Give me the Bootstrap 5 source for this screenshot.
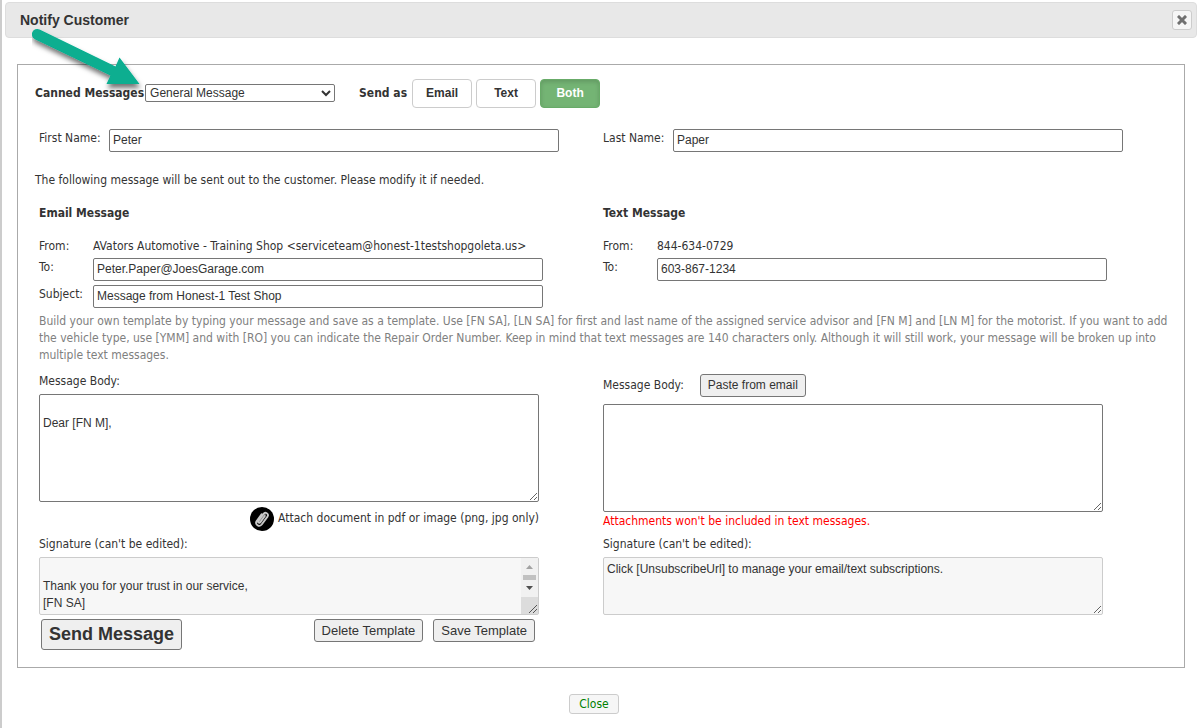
<!DOCTYPE html>
<html lang="en">
<head>
<meta charset="utf-8">
<meta name="viewport" content="width=device-width, initial-scale=1">
<title>Notify Customer</title>
<link href="https://cdn.jsdelivr.net/npm/bootstrap@5.3.0/dist/css/bootstrap.min.css" rel="stylesheet">
<style>
  body { font: 12px/17px "DejaVu Sans Condensed", "DejaVu Sans", sans-serif; color: #333; background: #fff; }
  .dialog { min-height: 100vh; border-left: 2px solid #ccc; padding: 2px 3px 0 3px; }
  .titlebar { height: 36px; background: #e8e8e8; border: 1px solid #ddd; border-radius: 4px; padding: 0 4px 0 14px; }
  .titlebar h1 { font: bold 14px/17px "Liberation Sans", Arial, sans-serif; }
  .btn-x { width: 20px; height: 20px; background: #f6f6f6; border: 1px solid #ccc; border-radius: 3px; }
  .panel { margin: 26px 12px 0; border: 1px solid #aaa; padding: 14px 17px 17px; }
  .inset { padding-left: 4px; }
  .half { flex: 0 0 50%; min-width: 0; }
  h2, .strong { font-size: 12px; line-height: 17px; font-weight: bold; }

  .form-control { font: 12px/17px "Liberation Sans", Arial, sans-serif; color: #333; background: #fff; border: 1px solid #767676; border-radius: 2px; padding: 2px 3px; min-width: 0; }
  input.form-control { height: 23px; max-width: 450px; padding: 1px 3px 3px; }
  textarea.form-control { max-width: 500px; resize: both; padding-top: 3px; }
  textarea.form-control.body-box { height: 108px; min-height: 0; }
  textarea.form-control.sign-box { height: 58px; min-height: 0; background: #f7f7f7; border-color: #ccc; overflow: hidden; }
  .col-box { max-width: 500px; }
  .picker { width: 190px; height: 18px; margin: 0 0 2px 1px; font: 12px/14px "Liberation Sans", Arial, sans-serif; color: #333; background: #fff; border: 1px solid #767676; border-radius: 2px; }
  .names { margin-top: 21px; }
  .names label { flex: 0 0 70px; padding-top: 1px; }
  .intro { margin: 20px 0 16px; }
  .lbl-field { flex: 0 0 54px; }
  label.lbl-field { padding-top: 1px; }
  .from-row { height: 16px; }

  .send-as { margin-left: 5px; }
  .send-as .btn { width: 60px; height: 29px; padding: 0; font: bold 12px/17px "Liberation Sans", Arial, sans-serif; color: #333; background: #fff; border: 1px solid #ccc; border-radius: 4px; }
  .send-as .btn.active { color: #fff; background: #74b474; border-color: #68ab68; box-shadow: inset 0 2px 4px rgba(0,0,0,.15); }
  .btn-sys { font-family: "Liberation Sans", Arial, sans-serif; color: #333; background: #efefef; border: 1px solid #767676; border-radius: 3px; height: 23px; padding: 0 7px; font-size: 12px; line-height: 19px; }
  .btn-tpl { font-size: 13px; }
  .btn-send { height: 31px; font-size: 18px; font-weight: bold; line-height: 27px; }
  .btn-close-dlg { width: 50px; height: 20px; padding: 0; font-size: 12px; line-height: 18px; color: green; background: #f6f6f6; border: 1px solid #ccc; border-radius: 3px; }
  .actions { padding: 0 4px 0 2px; }
  .tpl-group { gap: 10px; }
  .footer-row { padding: 26px 14px 0 0; }

  .hint { color: #808080; padding-left: 4px; margin: 5px -8px 0 0; }
  .lbl-body { margin: 9px 0 4px; }
  .paste-row { margin: 10px 0 7px; }
  .lbl-sign { margin: 5px 0 4px; }
  .warn { color: #f00; margin: 1px 0; }
  .attach { color: inherit; text-decoration: none; margin-top: 5px; }
  .attach span { padding-top: 3px; }
  .scroll { top: 1px; right: 1px; width: 17px; height: 56px; }
  .arrow { left: 30px; top: 26px; pointer-events: none; }
</style>
</head>
<body>
<main class="dialog position-relative">
  <header class="titlebar d-flex align-items-center justify-content-between">
    <h1 class="m-0">Notify Customer</h1>
    <button type="button" class="btn-x d-flex align-items-center justify-content-center p-0" aria-label="Close dialog">
      <svg width="10" height="10" viewBox="0 0 10 10"><path d="M2 2L8 8M8 2L2 8" stroke="#707070" stroke-width="3" stroke-linecap="square"/></svg>
    </button>
  </header>

  <form class="panel">
    <div class="d-flex align-items-center">
      <label class="strong" for="canned">Canned Messages</label>
      <select id="canned" class="picker"><option>General Message</option></select>
      <span class="strong ms-4" id="sendas">Send as</span>
      <div class="send-as d-flex gap-1" role="group" aria-labelledby="sendas">
        <button type="button" class="btn">Email</button>
        <button type="button" class="btn">Text</button>
        <button type="button" class="btn active">Both</button>
      </div>
    </div>

    <div class="inset names d-flex">
      <div class="half d-flex">
        <label for="first">First Name:</label>
        <input id="first" class="form-control" value="Peter">
      </div>
      <div class="half d-flex">
        <label for="last">Last Name:</label>
        <input id="last" class="form-control" value="Paper">
      </div>
    </div>

    <p class="intro">The following message will be sent out to the customer. Please modify it if needed.</p>

    <div class="inset d-flex">
      <section class="half d-flex flex-column gap-1">
        <h2 class="m-0 pb-2 mb-1">Email Message</h2>
        <div class="from-row d-flex"><span class="lbl-field">From:</span><span>AVators Automotive - Training Shop &lt;serviceteam@honest-1testshopgoleta.us&gt;</span></div>
        <div class="d-flex"><label class="lbl-field" for="mailto">To:</label><input id="mailto" class="form-control" value="Peter.Paper@JoesGarage.com"></div>
        <div class="d-flex"><label class="lbl-field" for="subject">Subject:</label><input id="subject" class="form-control" value="Message from Honest-1 Test Shop"></div>
      </section>
      <section class="half d-flex flex-column gap-1">
        <h2 class="m-0 pb-2 mb-1">Text Message</h2>
        <div class="from-row d-flex"><span class="lbl-field">From:</span><span>844-634-0729</span></div>
        <div class="d-flex"><label class="lbl-field" for="smsto">To:</label><input id="smsto" class="form-control" value="603-867-1234"></div>
      </section>
    </div>

    <p class="hint">Build your own template by typing your message and save as a template. Use [FN SA], [LN SA] for first and last name of the assigned service advisor and [FN M] and [LN M] for the motorist. If you want to add the vehicle type, use [YMM] and with [RO] you can indicate the Repair Order Number. Keep in mind that text messages are 140 characters only. Although it will still work, your message will be broken up into multiple text messages.</p>

    <div class="inset d-flex">
      <section class="half">
        <div class="col-box d-flex flex-column">
          <label class="lbl-body" for="mailbody">Message Body:</label>
          <textarea id="mailbody" class="form-control body-box">

Dear [FN M],</textarea>
          <a href="#" class="attach d-flex align-self-end gap-1">
            <svg width="24" height="24" viewBox="0 0 24 24"><circle cx="12" cy="12" r="12" fill="#000"/><g fill="none" stroke-linecap="round" stroke-linejoin="round"><path stroke="#777" stroke-width="3" d="M8.800 14.800L14.300 7.600"/><path stroke="#c8c8c8" stroke-width="1.900" d="M14.800 9L10.400 15.200C9.400 16.600 7.500 15.200 8.400 13.900L13.400 7C15.200 4.400 19.200 6.700 17.500 9.600L11.700 17.500C9.200 20.600 4.600 17.500 6.700 14.100L11.600 7.200"/></g></svg>
            <span>Attach document in pdf or image (png, jpg only)</span>
          </a>
          <label class="lbl-sign" for="mailsign">Signature (can't be edited):</label>
          <div class="position-relative d-flex">
            <textarea id="mailsign" class="form-control sign-box" readonly>

Thank you for your trust in our service,
[FN SA]</textarea>
            <svg class="scroll position-absolute" viewBox="0 0 17 56" aria-hidden="true"><path fill="#f1f1f1" d="M0 0h17v39H0z"/><path fill="#dcdcdc" d="M0 39h17v17H0z"/><path fill="#a3a3a3" d="M5 11h7L8.500 7z"/><path fill="#c1c1c1" d="M2 17h13v5H2z"/><path fill="#505050" d="M5 28h7L8.500 32z"/><path stroke="#555" d="M8 55L16 47M12 55L16 51"/></svg>
          </div>
          <div class="actions d-flex align-items-start justify-content-between mt-1">
            <button type="button" class="btn-sys btn-send">Send Message</button>
            <div class="tpl-group d-flex">
              <button type="button" class="btn-sys btn-tpl">Delete Template</button>
              <button type="button" class="btn-sys btn-tpl">Save Template</button>
            </div>
          </div>
        </div>
      </section>
      <section class="half">
        <div class="col-box d-flex flex-column">
          <div class="paste-row d-flex align-items-center">
            <label for="smsbody">Message Body:</label>
            <button type="button" class="btn-sys ms-3">Paste from email</button>
          </div>
          <textarea id="smsbody" class="form-control body-box"></textarea>
          <span class="warn">Attachments won't be included in text messages.</span>
          <label class="lbl-sign" for="smssign">Signature (can't be edited):</label>
          <textarea id="smssign" class="form-control sign-box" readonly>Click [UnsubscribeUrl] to manage your email/text subscriptions.</textarea>
        </div>
      </section>
    </div>
  </form>

  <div class="footer-row d-flex justify-content-center">
    <button type="button" class="btn-close-dlg">Close</button>
  </div>

  <svg class="arrow position-absolute" width="120" height="76" viewBox="32 26 120 76" aria-hidden="true">
    <defs><filter id="sh" x="-20%" y="-20%" width="140%" height="150%"><feDropShadow dx="1" dy="4" stdDeviation="2.500" flood-color="#000" flood-opacity=".55"/></filter></defs>
    <path filter="url(#sh)" fill="#07ae90" d="M39.500 29.500L115.500 66.500L119.500 57.500L139.500 84L106.500 84L110.500 75.500L35 39.200A5.300 5.300 0 0 1 39.500 29.500Z"/>
  </svg>
</main>
<script src="https://cdn.jsdelivr.net/npm/bootstrap@5.3.0/dist/js/bootstrap.bundle.min.js"></script>
</body>
</html>
